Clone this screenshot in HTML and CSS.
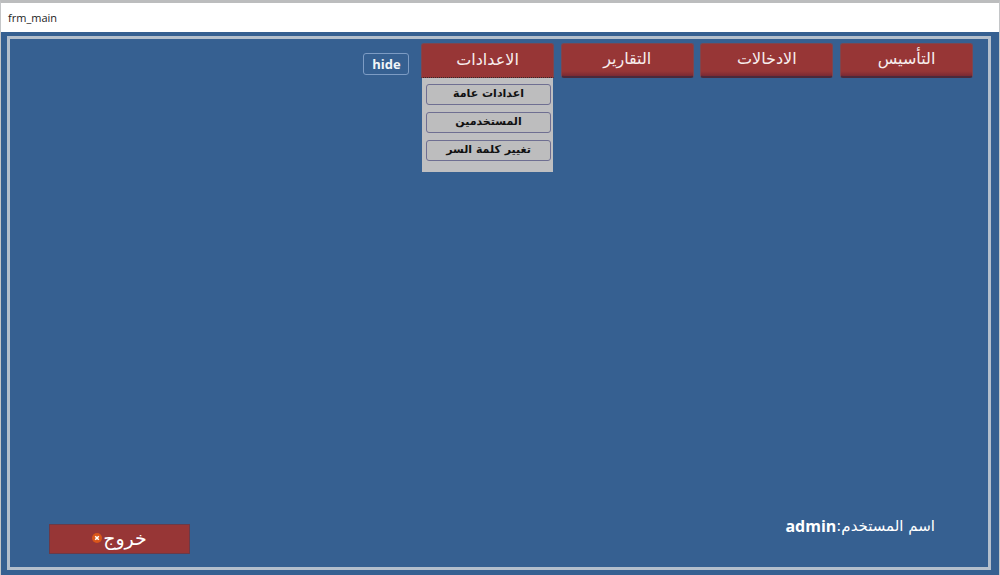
FILE: index.html
```html
<!DOCTYPE html>
<html lang="ar">
<head>
<meta charset="utf-8">
<title>frm_main</title>
<link rel="stylesheet" href="styles.css">
</head>
<body>
<div class="window">
  <div class="titlebar" dir="ltr">frm_main</div>
  <div class="client">
    <div class="frame">
      <nav class="nav" dir="rtl">
        <button class="nav-btn">التأسيس</button>
        <button class="nav-btn">الادخالات</button>
        <button class="nav-btn">التقارير</button>
        <div class="nav-item">
          <button class="nav-btn open">الاعدادات</button>
          <div class="menu">
            <button class="menu-btn">اعدادات عامة</button>
            <button class="menu-btn">المستخدمين</button>
            <button class="menu-btn">تغيير كلمة السر</button>
          </div>
        </div>
        <button class="hide-btn">hide</button>
      </nav>
      <div class="footer">
        <button class="logout">
          <svg class="x-icon" viewBox="0 0 10 10" width="10" height="10" aria-hidden="true"><circle cx="5" cy="5" r="5" fill="#d9561a"/><path d="M3.2 3.2l3.6 3.6M6.8 3.2l-3.6 3.6" stroke="#fff" stroke-width="1.5"/></svg>
          <span>خروج</span>
        </button>
        <div class="user"><bdi class="user-ar">اسم المستخدم:</bdi><b class="user-name">admin</b></div>
      </div>
    </div>
  </div>
</div>
</body>
</html>
```
FILE: styles.css
```css
* { box-sizing: border-box; }
html, body { margin: 0; height: 100%; }
body { width: 1000px; height: 575px; overflow: hidden; background: #fff; font-family: "DejaVu Sans", sans-serif; }
.window { height: 575px; display: flex; flex-direction: column; border-top: 3px solid #bcbdbe; border-left: 1px solid #c4c6c8; border-right: 1px solid #c4c6c8; }
.titlebar { height: 29px; flex: none; background: #fff; color: #222; font: 11px/30px "Open Sans", sans-serif; padding-left: 7px; }
.client { flex: 1; min-height: 0; background: #366091; padding: 4px 8px 5px 6px; }
.frame { height: 100%; border: 3px solid #b4bfcc; display: flex; flex-direction: column; justify-content: space-between; padding: 4px 15px 13px 39px; }
.nav { display: flex; gap: 6.67px; align-items: flex-start; }
.nav-btn { display: block; width: 133px; height: 35px; padding: 0 0 3px; background: linear-gradient(#973636 85%, #7a2a34); color: #f8eeee; border: 1px solid #7c4650; border-bottom: 2px solid #4a2a3c; border-radius: 3px; font: 16px "DejaVu Sans", sans-serif; }
.nav-item { position: relative; width: 133px; height: 35px; }
.nav-btn.open { background: #973636; border-bottom: 1px dotted #33282c; border-radius: 3px 3px 0 0; }
.menu { position: absolute; top: 35px; left: 1px; right: 1px; height: 94px; background: #bfbfc1; padding: 6px 2px 0 4px; display: flex; flex-direction: column; gap: 7px; }
.menu-btn { height: 21px; padding: 0 0 2px; background: #bdbdbe; color: #111; border: 1px solid #6f6f92; border-radius: 3px; font: bold 11px "DejaVu Sans", sans-serif; }
.hide-btn { margin: 10px 5px 0 0; width: 46px; height: 22px; padding: 0; background: #366091; color: #f2f5f8; border: 1px solid #7d9cc4; border-radius: 3px; font: bold 13px "Open Sans", sans-serif; }
.footer { display: flex; justify-content: space-between; align-items: flex-start; height: 38px; }
.logout { margin-top: 8px; width: 141px; height: 30px; padding: 0 0 3px; background: #973636; color: #fff; border: 1px solid #6a3a48; display: flex; align-items: center; justify-content: center; gap: 1px; font: 19px "DejaVu Sans", sans-serif; }
.x-icon { flex: none; }
.user { color: #fff; margin-right: 38px; font-size: 15px; line-height: 20px; display: flex; flex-direction: row-reverse; }
.user-name { font-family: "Open Sans", sans-serif; font-weight: 700; font-size: 16px; }
```
